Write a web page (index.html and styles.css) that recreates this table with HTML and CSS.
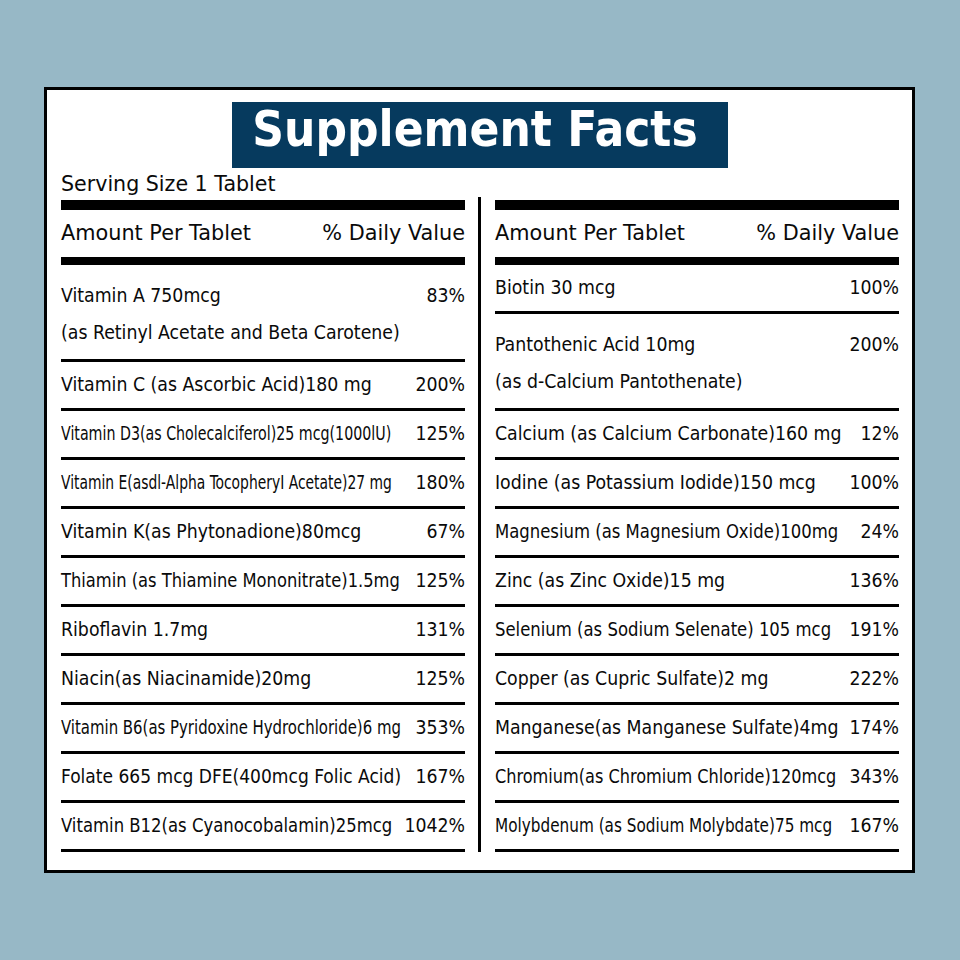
FILE: index.html
```html
<!DOCTYPE html>
<html lang="en">
<head>
<meta charset="utf-8">
<title>Supplement Facts</title>
<link rel="stylesheet" href="styles.css">
</head>
<body>
<div class="label">
  <h1 class="title">Supplement Facts</h1>
  <div class="serving">Serving Size 1 Tablet</div>
  <div class="cols">
    <div class="col">
      <div class="bar-top"></div>
      <div class="head"><span>Amount Per Tablet</span><span>% Daily Value</span></div>
      <div class="bar-mid"></div>
      <div class="row tall"><div class="name"><span>Vitamin A 750mcg</span><span>(as Retinyl Acetate and Beta Carotene)</span></div><span class="dv">83%</span></div>
      <div class="row"><span class="name">Vitamin C (as Ascorbic Acid)180 mg</span><span class="dv">200%</span></div>
      <div class="row"><span class="name sq82">Vitamin D3(as Cholecalciferol)25 mcg(1000lU)</span><span class="dv">125%</span></div>
      <div class="row"><span class="name sq80">Vitamin E(asdl-Alpha TocopheryI Acetate)27 mg</span><span class="dv">180%</span></div>
      <div class="row"><span class="name">Vitamin K(as Phytonadione)80mcg</span><span class="dv">67%</span></div>
      <div class="row"><span class="name sq94">Thiamin (as Thiamine Mononitrate)1.5mg</span><span class="dv">125%</span></div>
      <div class="row"><span class="name">Riboflavin 1.7mg</span><span class="dv">131%</span></div>
      <div class="row"><span class="name">Niacin(as Niacinamide)20mg</span><span class="dv">125%</span></div>
      <div class="row"><span class="name sq86">Vitamin B6(as Pyridoxine Hydrochloride)6 mg</span><span class="dv">353%</span></div>
      <div class="row"><span class="name sq98">Folate 665 mcg DFE(400mcg Folic Acid)</span><span class="dv">167%</span></div>
      <div class="row"><span class="name sq95">Vitamin B12(as Cyanocobalamin)25mcg</span><span class="dv">1042%</span></div>
    </div>
    <div class="divider"></div>
    <div class="col">
      <div class="bar-top"></div>
      <div class="head"><span>Amount Per Tablet</span><span>% Daily Value</span></div>
      <div class="bar-mid"></div>
      <div class="row"><span class="name">Biotin 30 mcg</span><span class="dv">100%</span></div>
      <div class="row tall"><div class="name"><span>Pantothenic Acid 10mg</span><span>(as d-Calcium Pantothenate)</span></div><span class="dv">200%</span></div>
      <div class="row"><span class="name">Calcium (as Calcium Carbonate)160 mg</span><span class="dv">12%</span></div>
      <div class="row"><span class="name">Iodine (as Potassium Iodide)150 mcg</span><span class="dv">100%</span></div>
      <div class="row"><span class="name sq95">Magnesium (as Magnesium Oxide)100mg</span><span class="dv">24%</span></div>
      <div class="row"><span class="name">Zinc (as Zinc Oxide)15 mg</span><span class="dv">136%</span></div>
      <div class="row"><span class="name sq95">Selenium (as Sodium Selenate) 105 mcg</span><span class="dv">191%</span></div>
      <div class="row"><span class="name">Copper (as Cupric Sulfate)2 mg</span><span class="dv">222%</span></div>
      <div class="row"><span class="name">Manganese(as Manganese Sulfate)4mg</span><span class="dv">174%</span></div>
      <div class="row"><span class="name sq93">Chromium(as Chromium Chloride)120mcg</span><span class="dv">343%</span></div>
      <div class="row"><span class="name sq88">Molybdenum (as Sodium Molybdate)75 mcg</span><span class="dv">167%</span></div>
    </div>
  </div>
</div>
</body>
</html>
```

FILE: styles.css
```css
* { box-sizing: border-box; }

html, body {
  margin: 0;
  background: #97b8c6;
}

body {
  padding: 87px 0 0 44px;
  font-family: "DejaVu Sans Condensed", "DejaVu Sans", sans-serif;
  color: #0a0a0a;
}

.label {
  width: 871px;
  height: 786px;
  background: #fff;
  border: 3px solid #000;
  padding: 0 13px 18px 14px;
  display: flex;
  flex-direction: column;
}

.title {
  align-self: center;
  width: 496px;
  height: 66px;
  margin: 12px 0 0;
  padding: 0 10px 0 0;
  background: #063a5e;
  color: #fff;
  font-family: "DejaVu Sans Condensed", "DejaVu Sans", sans-serif;
  font-weight: bold;
  font-size: 49px;
  line-height: 55px;
  text-align: center;
  white-space: nowrap;
}

.serving {
  margin-top: 4px;
  height: 25px;
  font-family: "DejaVu Sans", sans-serif;
  font-size: 20.6px;
  line-height: 25px;
  white-space: nowrap;
}

.cols {
  display: flex;
  flex: 1;
}

.col {
  width: 404px;
  display: flex;
  flex-direction: column;
}

.divider {
  width: 3px;
  background: #000;
  margin: 0 14px 0 13px;
}

.bar-top {
  margin-top: 3px;
  height: 10px;
  background: #000;
}

.bar-mid {
  height: 8px;
  background: #000;
}

.head {
  height: 47px;
  display: flex;
  justify-content: space-between;
  font-family: "DejaVu Sans", sans-serif;
  font-size: 20.8px;
  line-height: 47px;
  white-space: nowrap;
}

.row {
  height: 49px;
  border-bottom: 3px solid #000;
  display: flex;
  align-items: flex-start;
  font-size: 19.3px;
  line-height: 45px;
  white-space: nowrap;
}

.row.tall {
  height: 97px;
  padding-top: 12px;
  line-height: 37px;
}

.name {
  flex: 1 1 0;
  min-width: 0;
  transform-origin: left center;
}

.row.tall .name {
  display: flex;
  flex-direction: column;
}

.dv {
  flex: none;
  text-align: right;
}

.sq80 { transform: scaleX(0.80); }
.sq82 { transform: scaleX(0.82); }
.sq86 { transform: scaleX(0.86); }
.sq88 { transform: scaleX(0.88); }
.sq93 { transform: scaleX(0.93); }
.sq94 { transform: scaleX(0.94); }
.sq95 { transform: scaleX(0.95); }
.sq98 { transform: scaleX(0.985); }
```
